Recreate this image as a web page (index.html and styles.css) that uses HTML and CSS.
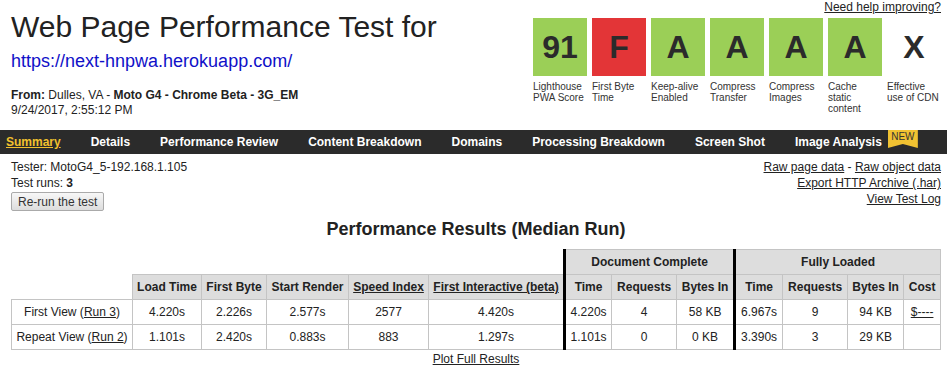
FILE: index.html
```html
<!DOCTYPE html>
<html lang="en">
<head>
<meta charset="utf-8">
<title>Web Page Performance Test</title>
<link rel="stylesheet" href="styles.css">
</head>
<body>
<div class="page">
  <header class="top">
    <div class="title-block">
      <h1 class="title">Web Page Performance Test for</h1>
      <a class="url" href="#">https://next-hnpwa.herokuapp.com/</a>
      <p class="meta"><b>From:</b> Dulles, VA - <b>Moto G4 - Chrome Beta - 3G_EM</b></p>
      <p class="meta">9/24/2017, 2:55:12 PM</p>
    </div>
    <div class="grades-block">
      <a class="help" href="#">Need help improving?</a>
      <ul class="grades">
        <li class="grade"><div class="box green">91</div><div class="label">Lighthouse PWA Score</div></li>
        <li class="grade"><div class="box red">F</div><div class="label">First Byte Time</div></li>
        <li class="grade"><div class="box green">A</div><div class="label">Keep-alive Enabled</div></li>
        <li class="grade"><div class="box green">A</div><div class="label">Compress Transfer</div></li>
        <li class="grade"><div class="box green">A</div><div class="label">Compress Images</div></li>
        <li class="grade"><div class="box green">A</div><div class="label">Cache static content</div></li>
        <li class="grade"><div class="box plain">X</div><div class="label">Effective use of CDN</div></li>
      </ul>
    </div>
  </header>
</div>
<nav class="nav">
  <a class="nav-item active" href="#">Summary</a>
  <a class="nav-item" href="#">Details</a>
  <a class="nav-item" href="#">Performance Review</a>
  <a class="nav-item" href="#">Content Breakdown</a>
  <a class="nav-item" href="#">Domains</a>
  <a class="nav-item" href="#">Processing Breakdown</a>
  <a class="nav-item" href="#">Screen Shot</a>
  <a class="nav-item nav-new" href="#"><span>Image Analysis</span><span class="new">NEW</span></a>
</nav>
<div class="page">
  <div class="info">
    <div class="info-left">
      <div class="line">Tester: MotoG4_5-192.168.1.105</div>
      <div class="line">Test runs: <b>3</b></div>
      <button class="btn" type="button">Re-run the test</button>
    </div>
    <div class="info-right">
      <div class="line"><a href="#">Raw page data</a> - <a href="#">Raw object data</a></div>
      <div class="line"><a href="#">Export HTTP Archive (.har)</a></div>
      <div class="line"><a href="#">View Test Log</a></div>
    </div>
  </div>
  <h2 class="results-title">Performance Results (Median Run)</h2>
  <table class="results">
    <colgroup>
      <col class="c-label"><col class="c-load"><col class="c-fb"><col class="c-sr"><col class="c-si"><col class="c-fi">
      <col class="c-dtime"><col class="c-dreq"><col class="c-dbytes">
      <col class="c-ftime"><col class="c-freq"><col class="c-fbytes"><col class="c-cost">
    </colgroup>
    <thead>
      <tr>
        <th class="blank" colspan="6"></th>
        <th class="sep" colspan="3">Document Complete</th>
        <th class="sep" colspan="4">Fully Loaded</th>
      </tr>
      <tr>
        <th class="blank"></th>
        <th>Load Time</th>
        <th>First Byte</th>
        <th>Start Render</th>
        <th><a href="#">Speed Index</a></th>
        <th><a href="#">First Interactive (beta)</a></th>
        <th class="sep">Time</th>
        <th>Requests</th>
        <th>Bytes In</th>
        <th class="sep">Time</th>
        <th>Requests</th>
        <th>Bytes In</th>
        <th>Cost</th>
      </tr>
    </thead>
    <tbody>
      <tr>
        <td>First View (<a href="#">Run 3</a>)</td>
        <td>4.220s</td>
        <td>2.226s</td>
        <td>2.577s</td>
        <td>2577</td>
        <td>4.420s</td>
        <td class="sep">4.220s</td>
        <td>4</td>
        <td>58 KB</td>
        <td class="sep">6.967s</td>
        <td>9</td>
        <td>94 KB</td>
        <td><a href="#">$----</a></td>
      </tr>
      <tr>
        <td>Repeat View (<a href="#">Run 2</a>)</td>
        <td>1.101s</td>
        <td>2.420s</td>
        <td>0.883s</td>
        <td>883</td>
        <td>1.297s</td>
        <td class="sep">1.101s</td>
        <td>0</td>
        <td>0 KB</td>
        <td class="sep">3.390s</td>
        <td>3</td>
        <td>29 KB</td>
        <td></td>
      </tr>
    </tbody>
  </table>
  <div class="plot"><a href="#">Plot Full Results</a></div>
</div>
</body>
</html>
```

FILE: styles.css
```css
* { box-sizing: border-box; }

body {
  margin: 0;
  font-family: "Liberation Sans", Arial, sans-serif;
  font-size: 12px;
  color: #222;
  background: #fff;
}

a { color: #222; }

.page {
  padding: 0 6px 0 11px;
}

.top {
  display: flex;
  justify-content: space-between;
  align-items: flex-start;
}

.title {
  margin: 10px 0 0;
  font-size: 30px;
  font-weight: normal;
  line-height: normal;
  color: #222;
}

.url {
  display: block;
  margin-top: 7px;
  font-size: 18px;
  line-height: normal;
  color: #1010c8;
  text-decoration: none;
}

.meta {
  margin: 0;
  line-height: 15px;
}

.title-block .meta:first-of-type { margin-top: 16px; }

.grades-block {
  display: flex;
  flex-direction: column;
  align-items: flex-end;
}

.help {
  display: block;
  line-height: 14px;
  color: #222;
}

.grades {
  display: flex;
  gap: 5px;
  margin: 4px 0 0;
  padding: 0;
  list-style: none;
}

.grade { width: 54px; }

.box {
  height: 58px;
  display: flex;
  align-items: center;
  justify-content: center;
  font-size: 32px;
  font-weight: bold;
  color: #2b2b2b;
}

.green { background: #9bcf57; }
.red { background: #e33537; }
.plain { background: transparent; }

.label {
  margin-top: 5px;
  font-size: 10px;
  line-height: normal;
  color: #333;
}

.nav {
  display: flex;
  gap: 30px;
  height: 24px;
  margin-top: 12px;
  padding-left: 6px;
  background: #2b2b2b;
}

.nav-item {
  display: flex;
  line-height: 24px;
  font-weight: bold;
  color: #fff;
  text-decoration: none;
}

.nav-item.active {
  color: #f2c12e;
  text-decoration: underline;
}

.new {
  align-self: flex-start;
  width: 30px;
  height: 18px;
  margin-left: 6px;
  background: #f1c232;
  color: #333;
  font-size: 10px;
  font-weight: normal;
  line-height: 13px;
  text-align: center;
  clip-path: polygon(0 0, 100% 0, 100% 100%, 50% 78%, 0 100%);
}

.info {
  display: flex;
  justify-content: space-between;
  margin-top: 5px;
}

.line { line-height: 16px; }

.info-right { text-align: right; }

.btn {
  display: block;
  height: 19px;
  margin-top: 1px;
  padding: 0 6px;
  border: 1px solid #aaa;
  border-radius: 2px;
  background: linear-gradient(#f7f7f7, #dddddd);
  font-family: "Liberation Sans", Arial, sans-serif;
  font-size: 12px;
  color: #333;
}

.results-title {
  margin: 8px 0 9px;
  font-size: 18px;
  line-height: 21px;
  font-weight: bold;
  text-align: center;
  color: #222;
}

.results {
  margin: 0 auto;
  width: 929px;
  table-layout: fixed;
  border-collapse: collapse;
}

.results th,
.results td {
  height: 25px;
  padding: 0 2px;
  border: 1px solid #c4c4c4;
  text-align: center;
  white-space: nowrap;
  font-size: 12px;
}

.results th {
  background: #dddddd;
  font-weight: bold;
}

.results th.blank {
  background: transparent;
  border: none;
}

.results .sep { border-left: 3px solid #000; }

.c-label { width: 121px; }
.c-load { width: 69px; }
.c-fb { width: 65px; }
.c-sr { width: 82px; }
.c-si { width: 80px; }
.c-fi { width: 136px; }
.c-dtime { width: 47px; }
.c-dreq { width: 65px; }
.c-dbytes { width: 58px; }
.c-ftime { width: 48px; }
.c-freq { width: 65px; }
.c-fbytes { width: 56px; }
.c-cost { width: 37px; }

.plot {
  margin-top: 1px;
  line-height: 16px;
  text-align: center;
}
```
